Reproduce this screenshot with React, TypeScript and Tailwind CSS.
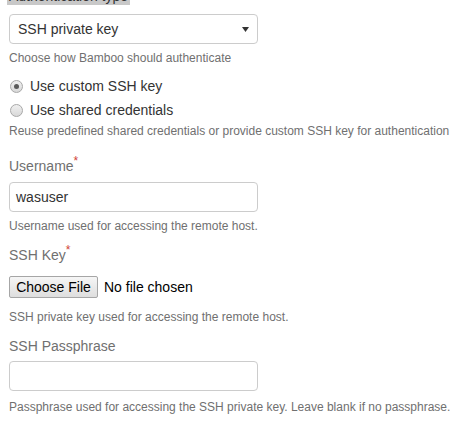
import React from 'react'

const font = { fontFamily: '"Liberation Sans", Arial, sans-serif' }

function Help({ children, className = '' }: { children: React.ReactNode; className?: string }) {
  return <p className={`text-[12px] leading-[16px] text-[#707070] ${className}`}>{children}</p>
}

function Label({ children, required, className = '' }: { children: React.ReactNode; required?: boolean; className?: string }) {
  return (
    <label className={`flex h-[17px] items-start text-[14px] leading-[17px] text-[#707070] ${className}`}>
      {children}
      {required && <span className="-mt-[3px] text-[12px] leading-none text-[#d04437]">*</span>}
    </label>
  )
}

function Radio({ checked, label }: { checked?: boolean; label: string }) {
  return (
    <div className="flex h-[24px] items-center">
      <span className="ml-[1px] flex h-[13px] w-[13px] items-center justify-center rounded-full border border-[#a8a8a8] bg-gradient-to-b from-[#f0f0f0] to-[#d8d8d8]">
        {checked && <span className="h-[5px] w-[5px] rounded-full bg-[#5a5a5a]" />}
      </span>
      <span className="ml-[7px] text-[14px] text-[#333333]">{label}</span>
    </div>
  )
}

export default function App() {
  return (
    <div className="h-[429px] w-[465px] overflow-hidden bg-white pl-[9px]" style={font}>
      <span className="-mt-[12px] -ml-[2px] block w-fit bg-[#c8c8c8] px-[2px] text-[14px] leading-[17px] text-[#333333]">
        Authentication type
      </span>

      <div className="mt-[9px] flex h-[30px] w-[249px] items-center justify-between rounded-[4px] border border-[#cccccc] bg-white pl-[8px] pr-[8px]">
        <span className="text-[14px] text-[#333333]">SSH private key</span>
        <svg width="7" height="5" viewBox="0 0 7 5">
          <path d="M0 0 L7 0 L3.5 5 Z" fill="#333333" />
        </svg>
      </div>
      <Help className="mt-[6px]">Choose how Bamboo should authenticate</Help>

      <div className="mt-[8px]">
        <Radio checked label="Use custom SSH key" />
        <Radio label="Use shared credentials" />
      </div>
      <Help className="mt-[1px] whitespace-nowrap">
        Reuse predefined shared credentials or provide custom SSH key for authentication
      </Help>

      <Label required className="mt-[19px]">Username</Label>
      <div className="mt-[7px] flex h-[30px] w-[249px] items-center rounded-[4px] border border-[#cccccc] pl-[6px]">
        <span className="text-[14px] text-[#333333]">wasuser</span>
      </div>
      <Help className="mt-[6px]">Username used for accessing the remote host.</Help>

      <Label required className="mt-[13px]">SSH Key</Label>
      <div className="mt-[12px] flex h-[22px] items-center">
        <button className="flex h-[22px] w-[89px] items-center justify-center rounded-[2px] border border-[#a6a6a6] bg-gradient-to-b from-[#f6f6f6] to-[#dedede] text-[14px] text-[#000000]">
          Choose File
        </button>
        <span className="ml-[6px] text-[14px] text-[#000000]">No file chosen</span>
      </div>
      <Help className="mt-[11px]">SSH private key used for accessing the remote host.</Help>

      <Label className="mt-[13px]">SSH Passphrase</Label>
      <div className="mt-[6px] h-[30px] w-[249px] rounded-[4px] border border-[#cccccc]" />
      <Help className="mt-[8px] whitespace-nowrap">
        Passphrase used for accessing the SSH private key. Leave blank if no passphrase.
      </Help>
    </div>
  )
}
